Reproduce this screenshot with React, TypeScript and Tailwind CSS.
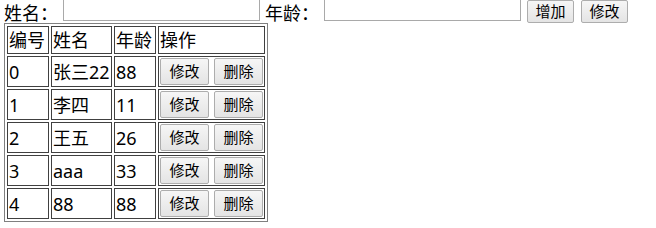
const ROWS = [
  { id: 0, name: '张三22', age: 88 },
  { id: 1, name: '李四', age: 11 },
  { id: 2, name: '王五', age: 26 },
  { id: 3, name: 'aaa', age: 33 },
  { id: 4, name: '88', age: 88 },
]

const FONT = { fontFamily: '"Noto Sans", "Noto Sans CJK SC", sans-serif' }
const CJK = { fontFamily: '"Noto Sans CJK SC", sans-serif' }

function Btn({ label, wide }: { label: string; wide?: boolean }) {
  return (
    <button
      type="button"
      className={`${wide ? 'w-[49px] h-[27px]' : 'w-[47px] h-[23px]'} shrink-0 rounded-[2px] border border-[#adadad] bg-gradient-to-b from-[#f6f6f6] to-[#e4e4e4] text-[15px] leading-none text-black`}
    >
      {label}
    </button>
  )
}

function Cell({ children, className = '' }: { children: React.ReactNode; className?: string }) {
  return (
    <td className={`border border-[#404040] p-[1px] align-middle text-left ${className}`}>{children}</td>
  )
}

export default function App() {
  return (
    <div className="w-[656px] h-[228px] overflow-hidden bg-white text-black text-[18px] leading-[24px]" style={FONT}>
      <div className="flex items-start h-[22px] pl-[4px]">
        <span className="w-[59px] h-[24px] shrink-0 leading-[24px]" style={CJK}>姓名：</span>
        <input className="w-[197px] h-[25px] -mt-[4px] shrink-0 border border-[#a9a9a9] bg-white" />
        <span className="ml-[5px] w-[59px] h-[24px] shrink-0 leading-[24px]" style={CJK}>年龄：</span>
        <input className="w-[197px] h-[25px] -mt-[4px] shrink-0 border border-[#a9a9a9] bg-white" />
        <div className="ml-[6px] flex gap-[7px]">
          <Btn label="增加" />
          <Btn label="修改" />
        </div>
      </div>
      <div className="pl-[4px] pt-[1px]">
        <table className="border-separate border-spacing-[2px] border border-[#808080]">
          <tbody>
            <tr className="h-[28px]">
              <Cell className="w-[42px]">编号</Cell>
              <Cell className="w-[61px]">姓名</Cell>
              <Cell className="w-[42px]">年龄</Cell>
              <Cell className="w-[105px]">操作</Cell>
            </tr>
            {ROWS.map((r) => (
              <tr key={r.id} className="h-[31px]">
                <Cell>{r.id}</Cell>
                <Cell>{r.name}</Cell>
                <Cell>{r.age}</Cell>
                <Cell>
                  <div className="flex gap-[5px]">
                    <Btn label="修改" wide />
                    <Btn label="删除" wide />
                  </div>
                </Cell>
              </tr>
            ))}
          </tbody>
        </table>
      </div>
    </div>
  )
}
